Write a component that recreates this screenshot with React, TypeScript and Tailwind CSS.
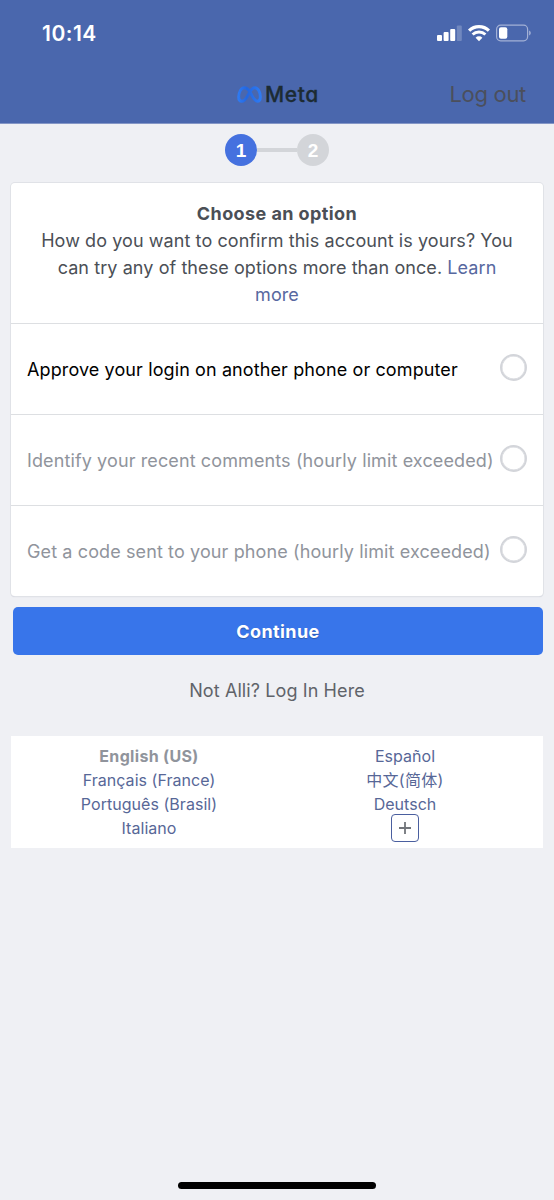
import React from "react";

function StatusIcons() {
  return (
    <svg width="94" height="18" viewBox="0 0 94 18" fill="none" aria-hidden="true">
      <rect x="0" y="11" width="5" height="6" rx="1" fill="#fff" />
      <rect x="6.6" y="8" width="5" height="9" rx="1" fill="#fff" />
      <rect x="13.2" y="5" width="5" height="12" rx="1" fill="#fff" />
      <rect x="19.8" y="1.5" width="5" height="15.5" rx="1" fill="#fff" fillOpacity="0.22" />
      <path d="M32.1 6.6a14.2 14.2 0 0 1 19.8 0" stroke="#fff" strokeWidth="3.2" />
      <path d="M35.6 10.5a9.3 9.3 0 0 1 12.8 0" stroke="#fff" strokeWidth="3" />
      <path d="M42 17.2l-3.4-3.5a4.8 4.8 0 0 1 6.8 0z" fill="#fff" />
      <rect x="59.6" y="1.2" width="31" height="15.6" rx="4" stroke="#a3b1d6" strokeWidth="1.2" />
      <rect x="62" y="3.3" width="8.3" height="11.4" rx="2" fill="#fff" />
      <path d="M92.1 6.5c2.2.8 2.2 4.2 0 5z" fill="#a3b1d6" />
    </svg>
  );
}

function MetaMark() {
  return (
    <svg width="25" height="17" viewBox="0 0 25 17" fill="none" aria-hidden="true">
      <defs>
        <linearGradient id="mark" x1="0" x2="25" y1="0" y2="0" gradientUnits="userSpaceOnUse">
          <stop offset="0" stopColor="#2f7df5" />
          <stop offset="0.4" stopColor="#2466de" />
          <stop offset="1" stopColor="#2f7df5" />
        </linearGradient>
      </defs>
      <path
        d="M12.5 5.2C10.9 2.9 9.3 1.7 7.4 1.7C4.1 1.7 1.7 6.4 1.7 10.9C1.7 13.6 2.9 15.2 4.9 15.2C7 15.2 8.4 13.6 10.6 9.9L12.5 6.5C14.1 3.5 15.7 1.7 17.8 1.7C21 1.7 23.3 6.3 23.3 10.9C23.3 13.7 22.2 15.2 20.3 15.2C18.2 15.2 17 13.3 14.9 9.6C14 8 13.3 6.4 12.5 5.2Z"
        stroke="url(#mark)"
        strokeWidth="2.9"
      />
    </svg>
  );
}

function Option({ label, disabled }: { label: string; disabled?: boolean }) {
  return (
    <label className="flex h-[91px] items-center justify-between border-t border-[#dddfe2] pr-4 pl-4">
      <span
        className={
          disabled
            ? "mt-px text-[18px] tracking-[0.115px] whitespace-nowrap text-[#90949c]"
            : "mt-px text-[18px] tracking-[0.11px] whitespace-nowrap text-black"
        }
      >
        {label}
      </span>
      <span className="-mt-[4px] size-[27px] shrink-0 rounded-full border-[2.5px] border-[#d3d5da] bg-white shadow-[inset_0_0_0_0.5px_#d3d5da]" />
    </label>
  );
}

export default function App() {
  return (
    <div className="flex h-[1200px] w-[554px] flex-col bg-[#eff0f4] font-['Inter','Noto_Sans_CJK_SC',sans-serif]">
      <header className="flex h-[124px] flex-col border-b border-[#8496c6] bg-[#4a67ad]">
        <div className="flex h-[66px] items-center justify-between pr-[23px] pl-[42px]">
          <span className="mt-[2px] text-[21px] font-semibold tracking-[0.5px] text-white">10:14</span>
          <StatusIcons />
        </div>
        <div className="grid h-14 grid-cols-[1fr_auto_1fr] items-center pr-7 pl-7">
          <span />
          <div className="flex items-center gap-[3px] pl-[2px]">
            <MetaMark />
            <span className="mt-px text-[21px] font-medium tracking-[0.6px] text-[#1c2b33] [font-feature-settings:'cv11'] [-webkit-text-stroke:0.3px_#1c2b33]">
              Meta
            </span>
          </div>
          <span className="text-right text-[22px] tracking-[-0.3px] text-[#4b4f5c]">Log out</span>
        </div>
      </header>

      <main className="flex flex-1 flex-col">
        <div className="flex h-[59px] items-start justify-center pt-[10px]">
          <span className="flex size-8 items-center justify-center rounded-full bg-[#4571df] pt-[2px] font-['Liberation_Sans',sans-serif] text-[19px] font-bold text-white">
            1
          </span>
          <span className="mt-[14px] h-1 w-10 bg-[#d3d5d9]" />
          <span className="flex size-8 items-center justify-center rounded-full bg-[#d3d5d9] pt-[2px] font-['Liberation_Sans',sans-serif] text-[19px] font-bold text-white">
            2
          </span>
        </div>

        <section className="mx-[11px] rounded-[4px] bg-white shadow-[0_0_0_1px_#e0e2e7,0_1px_1px_#c5c9d2]">
          <div className="h-[140px] pt-[17px] text-center text-[18px] leading-[27px] text-[#4b4f56]">
            <h1 className="font-bold tracking-[0.42px]">Choose an option</h1>
            <p className="tracking-[0.08px]">
              How do you want to confirm this account is yours? You
              <br />
              can try any of these options more than once. <a className="text-[#5768a0]">Learn</a>
              <br />
              <a className="text-[#5768a0]">more</a>
            </p>
          </div>
          <Option label="Approve your login on another phone or computer" />
          <Option label="Identify your recent comments (hourly limit exceeded)" disabled />
          <Option label="Get a code sent to your phone (hourly limit exceeded)" disabled />
        </section>

        <button className="mt-[11px] mr-[11px] ml-[13px] h-12 rounded-[5px] bg-[#3875ea] text-[18px] font-bold tracking-[0.42px] text-white [text-shadow:0_1px_1px_rgba(0,0,0,0.25)]">
          Continue
        </button>

        <p className="mt-[22px] h-7 text-center text-[18px] leading-7 tracking-[0.1px] text-[#606369]">Not Alli? Log In Here</p>

        <footer className="mx-[11px] mt-[31px] grid h-28 grid-cols-2 bg-white px-[10px] pt-2 text-center text-[16px] leading-6 tracking-[0.04px] text-[#576797]">
          <div className="flex flex-col">
            <span className="font-bold tracking-[0.33px] text-[#90949c]">English (US)</span>
            <a>Français (France)</a>
            <a>Português (Brasil)</a>
            <a>Italiano</a>
          </div>
          <div className="flex flex-col items-center">
            <a>Español</a>
            <a className="h-6 tracking-[0.3px]">中文(简体)</a>
            <a>Deutsch</a>
            <span className="-mt-[2px] flex size-7 items-center justify-center rounded-[4px] border-[1.5px] border-[#4a5f9f]">
              <svg width="12" height="12" viewBox="0 0 12 12" stroke="#72757b" strokeWidth="1.8" aria-hidden="true">
                <path d="M6 0v12M0 6h12" />
              </svg>
            </span>
          </div>
        </footer>
      </main>

      <div className="mb-[11px] h-[7px] w-[198px] self-center rounded-full bg-black" />
    </div>
  );
}
